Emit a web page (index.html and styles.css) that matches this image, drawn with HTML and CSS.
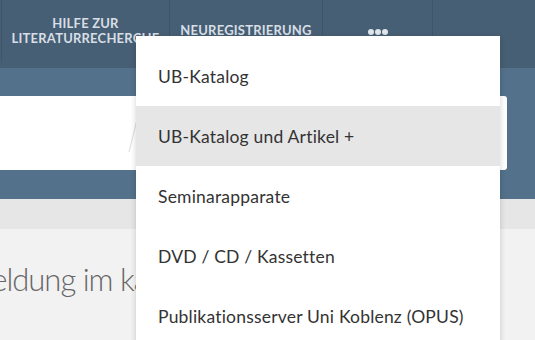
FILE: index.html
```html
<!DOCTYPE html>
<html lang="de">
<head>
<meta charset="utf-8">
<title>UB Katalog</title>
<link rel="stylesheet" href="styles.css">
</head>
<body>
<header class="topnav">
  <div class="nav-edge"></div>
  <a class="nav-item nav-help">Hilfe zur<br>Literaturrecherche</a>
  <a class="nav-item nav-reg">Neuregistrierung</a>
  <a class="nav-item nav-more"><span class="dot"></span><span class="dot"></span><span class="dot"></span></a>
  <a class="nav-item nav-rest"></a>
</header>
<section class="search-band">
  <div class="search-box">
    <svg class="sep" width="10" height="34" viewBox="0 0 10 34"><line x1="9" y1="0.5" x2="1" y2="33" stroke="#dcdcdc" stroke-width="1"/></svg>
  </div>
</section>
<div class="strip"></div>
<main class="content">
  <h1 class="title">Anmeldung im katalog</h1>
</main>
<ul class="dropdown">
  <li class="dd-item">UB-Katalog</li>
  <li class="dd-item active">UB-Katalog und Artikel +</li>
  <li class="dd-item">Seminarapparate</li>
  <li class="dd-item">DVD / CD / Kassetten</li>
  <li class="dd-item">Publikationsserver Uni Koblenz (OPUS)</li>
</ul>
</body>
</html>
```
FILE: styles.css
```css
* { box-sizing: border-box; }
html, body { margin: 0; padding: 0; }
body {
  width: 535px;
  height: 340px;
  overflow: hidden;
  background: #f2f2f2;
  font-family: Lato, "Noto Sans", sans-serif;
  position: relative;
}
.topnav {
  height: 68px;
  background: #475f74;
  display: flex;
  align-items: stretch;
  padding-bottom: 7px;
}
.nav-edge { width: 1px; }
.nav-item {
  border-left: 1px solid #3e5467;
  color: #d7dee5;
  font-weight: 700;
  font-size: 13px;
  line-height: 15px;
  letter-spacing: 0.2px;
  text-transform: uppercase;
  text-align: center;
  display: flex;
  align-items: center;
  justify-content: center;
}
.nav-help { width: 168px; }
.nav-reg { width: 153px; }
.nav-more { width: 110px; gap: 1px; padding-top: 3px; }
.nav-rest { flex: 1; }
.dot {
  width: 6px;
  height: 6px;
  border-radius: 50%;
  background: #dfe5ea;
}
.search-band {
  background: #53718b;
  height: 131px;
  padding: 28px 28px 0 0;
  display: flex;
}
.search-box {
  flex: 1;
  height: 74px;
  margin-left: -10px;
  background: #fff;
  border-radius: 3px;
  display: flex;
  align-items: center;
  padding-left: 138px;
  padding-top: 6px;
}
.strip {
  height: 30px;
  background: #e6e6e6;
}
.content {
  padding-top: 31px;
}
.title {
  margin: 0 0 0 -68px;
  font-weight: 300;
  font-size: 31px;
  letter-spacing: -1px;
  color: #666;
  white-space: nowrap;
}
.dropdown {
  position: absolute;
  left: 136px;
  top: 36px;
  width: 364px;
  margin: 0;
  padding: 10px 0 0;
  list-style: none;
  background: #fff;
  box-shadow: 0 2px 6px rgba(0,0,0,0.18);
}
.dd-item {
  height: 60px;
  display: flex;
  align-items: center;
  padding-left: 22px;
  font-size: 17.5px;
  letter-spacing: 0.2px;
  color: #333;
}
.dd-item.active { background: #e6e6e6; }
```
